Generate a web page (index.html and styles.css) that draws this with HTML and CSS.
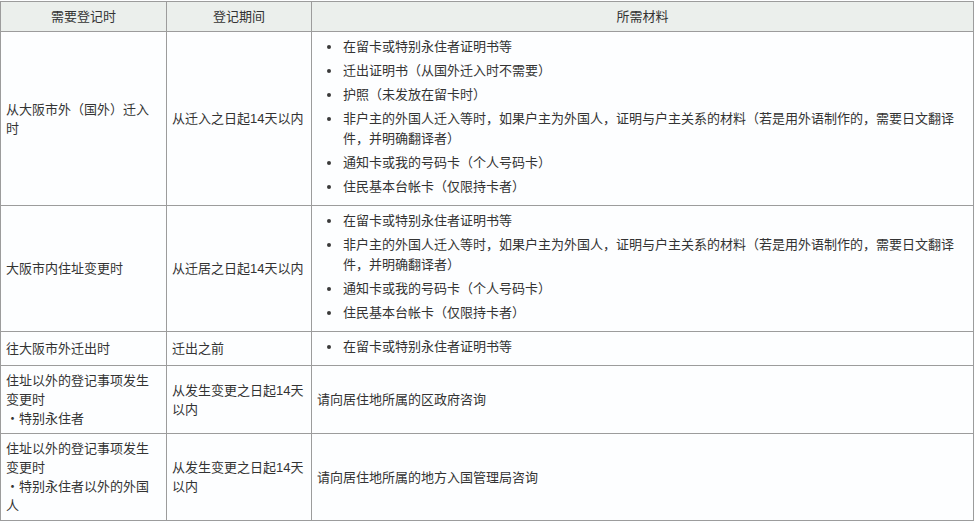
FILE: index.html
```html
<!DOCTYPE html>
<html lang="zh-CN">
<head>
<meta charset="utf-8">
<title>登记</title>
<link rel="stylesheet" href="styles.css">
</head>
<body>
<table class="reg">
  <colgroup>
    <col class="c1">
    <col class="c2">
    <col class="c3">
  </colgroup>
  <thead>
    <tr>
      <th>需要登记时</th>
      <th>登记期间</th>
      <th>所需材料</th>
    </tr>
  </thead>
  <tbody>
    <tr>
      <td>从大阪市外（国外）迁入时</td>
      <td class="period">从迁入之日起14天以内</td>
      <td class="mat list">
        <ul>
          <li>在留卡或特别永住者证明书等</li>
          <li>迁出证明书（从国外迁入时不需要）</li>
          <li>护照（未发放在留卡时）</li>
          <li>非户主的外国人迁入等时，如果户主为外国人，证明与户主关系的材料（若是用外语制作的，需要日文翻译件，并明确翻译者）</li>
          <li>通知卡或我的号码卡（个人号码卡）</li>
          <li>住民基本台帐卡（仅限持卡者）</li>
        </ul>
      </td>
    </tr>
    <tr>
      <td>大阪市内住址变更时</td>
      <td class="period">从迁居之日起14天以内</td>
      <td class="mat list">
        <ul>
          <li>在留卡或特别永住者证明书等</li>
          <li>非户主的外国人迁入等时，如果户主为外国人，证明与户主关系的材料（若是用外语制作的，需要日文翻译件，并明确翻译者）</li>
          <li>通知卡或我的号码卡（个人号码卡）</li>
          <li>住民基本台帐卡（仅限持卡者）</li>
        </ul>
      </td>
    </tr>
    <tr>
      <td>往大阪市外迁出时</td>
      <td class="period">迁出之前</td>
      <td class="mat list">
        <ul>
          <li>在留卡或特别永住者证明书等</li>
        </ul>
      </td>
    </tr>
    <tr>
      <td>住址以外的登记事项发生变更时<br>・特别永住者</td>
      <td class="period">从发生变更之日起14天以内</td>
      <td class="mat">请向居住地所属的区政府咨询</td>
    </tr>
    <tr>
      <td>住址以外的登记事项发生变更时<br>・特别永住者以外的外国人</td>
      <td class="period">从发生变更之日起14天以内</td>
      <td class="mat">请向居住地所属的地方入国管理局咨询</td>
    </tr>
  </tbody>
</table>
</body>
</html>
```

FILE: styles.css
```css
html, body {
  margin: 0;
  padding: 0;
  background: #fdfeff;
}

body {
  font-family: "Liberation Sans", "Noto Sans CJK SC", sans-serif;
  font-size: 13px;
  color: #333;
}

.reg {
  border-collapse: collapse;
  table-layout: fixed;
  width: 973px;
  margin: 1px 0 0 0;
}

.c1 { width: 166px; }
.c2 { width: 145px; }
.c3 { width: 662px; }

.reg th,
.reg td {
  border: 1px solid #9c9c9c;
  padding: 5px 8px 5px 5px;
  line-height: 19px;
  vertical-align: middle;
  text-align: left;
  font-weight: normal;
}

.reg th {
  background: #ebefec;
  text-align: center;
  padding: 5px;
}

.reg td.period {
  padding-right: 4px;
}

.reg td.mat {
  padding-right: 10px;
}

.reg td.list {
  padding-bottom: 4px;
}

.reg ul {
  margin: 0;
  padding: 0;
  list-style: none;
}

.reg li {
  display: flex;
  line-height: 20px;
  margin-bottom: 4px;
}

.reg li::before {
  content: "";
  flex: 0 0 4px;
  width: 4px;
  height: 4px;
  border-radius: 50%;
  background: #3a3a3a;
  margin: 8px 12px 0 10px;
}
```
